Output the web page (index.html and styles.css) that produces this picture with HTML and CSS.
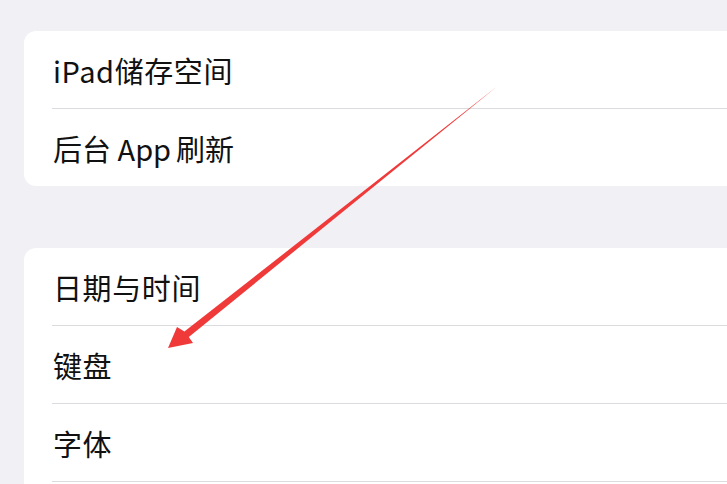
FILE: index.html
```html
<!DOCTYPE html>
<html lang="zh">
<head>
    <meta charset="UTF-8">
    <meta name="viewport" content="width=device-width, initial-scale=1.0">
    <title>通用</title>
    <link rel="stylesheet" href="styles.css">
</head>
<body>
    <div class="page">
        <div class="group">
            <div class="row"><span>iPad储存空间</span></div>
            <div class="row"><span class="tight">后台 App&#8198;刷新</span></div>
        </div>

        <div class="group">
            <div class="row"><span>日期与时间</span></div>
            <div class="row"><span>键盘</span></div>
            <div class="row"><span>字体</span></div>
            <div class="row"></div>
        </div>
    </div>

    <!-- 标注箭头 -->
    <svg class="arrow" width="727" height="484" viewBox="0 0 727 484">
        <polygon points="497,86.5 188.8,337 193,343 168,348 177,327 184.4,331.6" fill="#f03a3a"/>
    </svg>
</body>
</html>
```

FILE: styles.css
```css
/* 基础样式 */
body {
    margin: 0;
    padding: 0;
    font-family: "Noto Sans CJK SC", "Noto Sans", sans-serif;
    background: #f0f0f5;
    overflow: hidden;
    height: 484px;
}

.page {
    padding: 31px 0 0 24px;
}

.group {
    background: #fff;
    border-radius: 12px;
    margin-right: -30px;
    margin-bottom: 62px;
    overflow: hidden;
}

.row {
    height: 77px;
    margin-left: 28px;
    padding-left: 1px;
    display: flex;
    align-items: center;
    border-bottom: 1px solid #dcdce0;
    font-size: 29px;
    letter-spacing: 0.6px;
    color: #111;
}

.row .tight {
    letter-spacing: 0;
}

.group .row:last-child {
    border-bottom: none;
}

.arrow {
    position: absolute;
    top: 0;
    left: 0;
    pointer-events: none;
}
```
